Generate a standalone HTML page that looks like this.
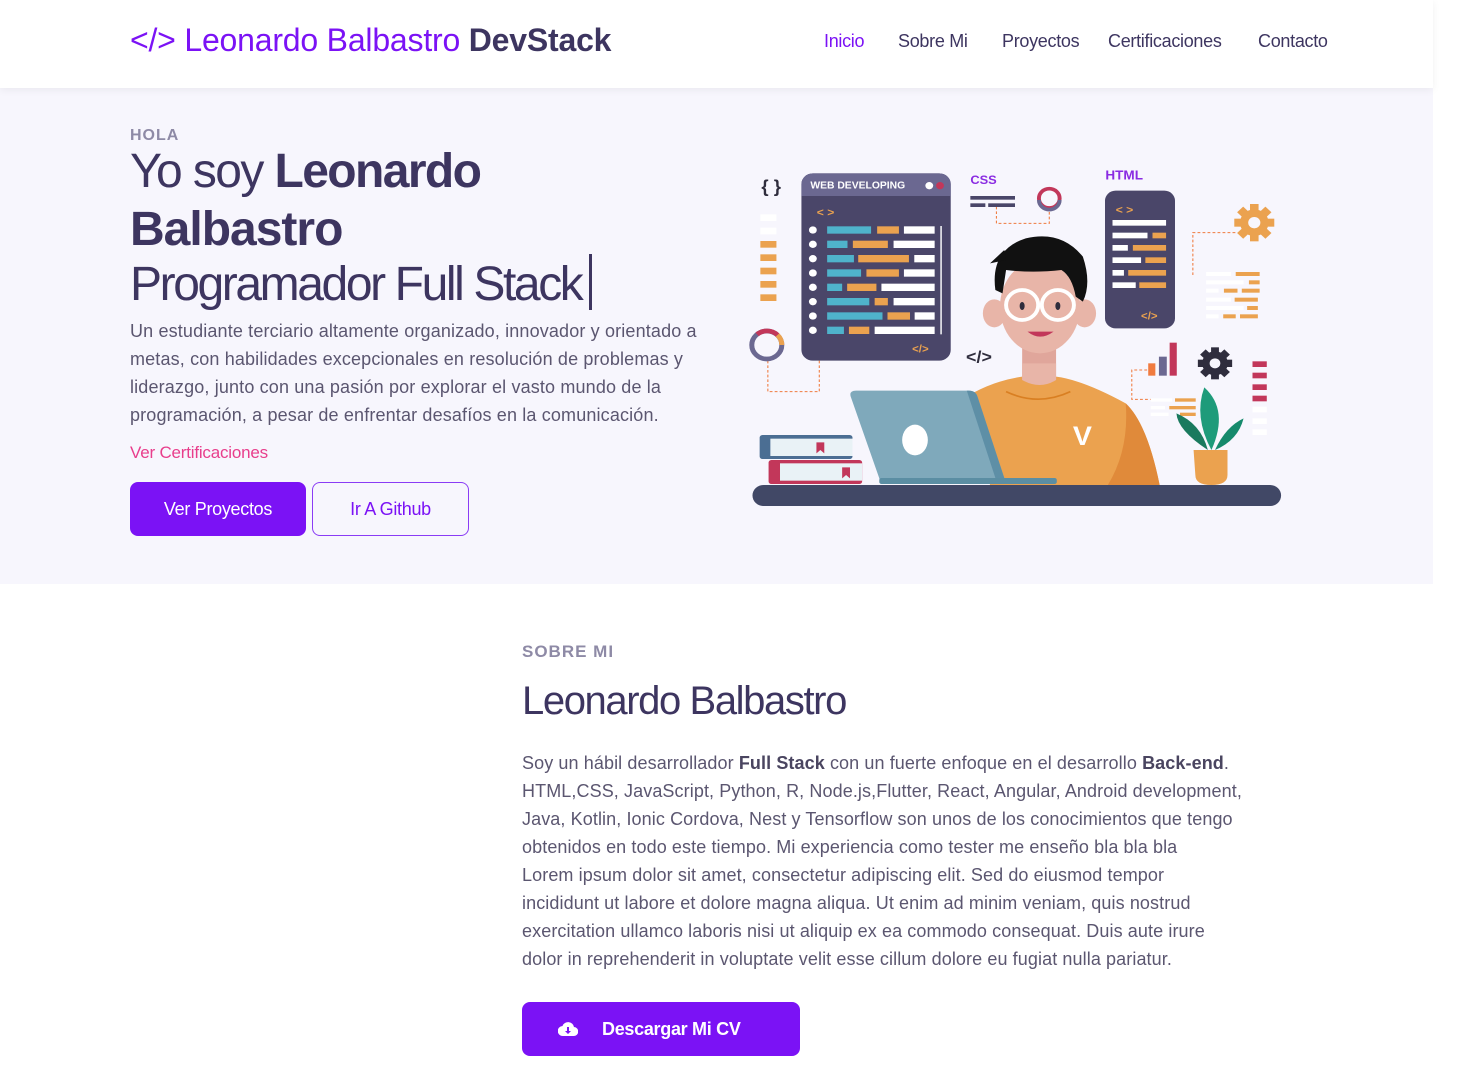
<!DOCTYPE html>
<html><head><meta charset="utf-8">
<style>
*{margin:0;padding:0;box-sizing:border-box}
body{width:1474px;height:1065px;overflow:hidden;background:#fff;font-family:"Liberation Sans",sans-serif;color:#3d3560;position:relative}
.abs{position:absolute;white-space:nowrap}
nav{position:absolute;left:0;top:0;width:1433px;height:88px;background:#fff;box-shadow:0 2px 8px rgba(0,0,0,.06);z-index:2}
.logo{left:130px;top:22px;font-size:32px;color:#7b12f5;letter-spacing:-0.2px}
.logo b{color:#3d3560}
.nl{top:31px;font-size:18px;color:#3d3560;letter-spacing:-0.3px}
.hero{position:absolute;left:0;top:88px;width:1433px;height:496px;background:#f7f6fd}
.hola{left:130px;top:127px;font-size:16px;font-weight:bold;color:#8e8aa6;letter-spacing:1px}
.h1{left:130px;font-size:48px;color:#3d3560;letter-spacing:-1px}
.p{font-size:18px;color:#5b5670;line-height:28px}
.btn{position:absolute;border-radius:8px;font-size:18px;display:flex;align-items:center;justify-content:center;letter-spacing:-0.3px}
</style></head><body>
<nav>
<div class="abs logo">&lt;/&gt; Leonardo Balbastro <b>DevStack</b></div>
<div class="abs nl" style="left:824px;color:#7b12f5">Inicio</div>
<div class="abs nl" style="left:898px">Sobre Mi</div>
<div class="abs nl" style="left:1002px">Proyectos</div>
<div class="abs nl" style="left:1108px">Certificaciones</div>
<div class="abs nl" style="left:1258px">Contacto</div>
</nav>
<div class="hero"></div>
<div class="abs hola">HOLA</div>
<div class="abs h1" style="top:144px;font-weight:normal;letter-spacing:-1.6px">Yo soy <span style="font-weight:bold">Leonardo</span></div>
<div class="abs h1" style="top:202px;font-weight:bold">Balbastro</div>
<div class="abs h1" style="top:254px;font-weight:normal;letter-spacing:-2.4px">Programador Full Stack<span style="display:inline-block;width:3px;height:56px;background:#3d3560;vertical-align:-10px;margin-left:8px"></span></div>
<div class="abs p" style="left:130px;top:317px;letter-spacing:0.15px">Un estudiante terciario altamente organizado, innovador y orientado a<br>metas, con habilidades excepcionales en resolución de problemas y<br>liderazgo, junto con una pasión por explorar el vasto mundo de la<br>programación, a pesar de enfrentar desafíos en la comunicación.</div>
<div class="abs" style="left:130px;top:443px;font-size:17px;color:#e83e8c;letter-spacing:-0.2px">Ver Certificaciones</div>
<div class="btn" style="left:130px;top:482px;width:176px;height:54px;background:#7b12f5;color:#fff">Ver Proyectos</div>
<div class="btn" style="left:312px;top:482px;width:157px;height:54px;border:1px solid #8a3cf5;color:#7b12f5;background:#f7f6fd">Ir A Github</div>

<svg class="abs" style="left:740px;top:150px" width="560" height="370" viewBox="0 0 1568 1110" preserveAspectRatio="none">
<g fill="none" stroke="#f07b3f" stroke-width="3" stroke-dasharray="8 6">
<path d="M78 632V725H222V632"/><path d="M718 170V220H866V180"/><path d="M1268 375V248H1390"/><path d="M1140 660H1097V748H1150"/>
</g>
<text x="60" y="128" font-size="52" font-weight="bold" fill="#2f2d3d" font-family="Liberation Sans">{ }</text>
<g fill="#fff"><rect x="57" y="193" width="45" height="20"/><rect x="57" y="233" width="45" height="20"/></g>
<g fill="#eba24f"><rect x="57" y="273" width="45" height="20"/><rect x="57" y="313" width="45" height="20"/><rect x="57" y="353" width="45" height="20"/><rect x="57" y="393" width="45" height="20"/><rect x="57" y="433" width="45" height="20"/></g>
<circle cx="75" cy="585" r="42" fill="none" stroke="#6b6891" stroke-width="14"/>
<path d="M48 553A42 42 0 0 1 105 555" fill="none" stroke="#c2375a" stroke-width="14"/>
<path d="M105 555A42 42 0 0 1 117 585" fill="none" stroke="#eba24f" stroke-width="14"/>
<rect x="172" y="70" width="418" height="562" rx="32" fill="#4a4669"/>
<path d="M204 70H558A32 32 0 0 1 590 102V138H172V102A32 32 0 0 1 204 70Z" fill="#6b6891"/>
<text x="197" y="116" font-size="29" font-weight="bold" fill="#fff" font-family="Liberation Sans">WEB DEVELOPING</text>
<circle cx="530" cy="107" r="11" fill="#fff"/><circle cx="560" cy="107" r="11" fill="#c2375a"/>
<text x="215" y="198" font-size="34" font-weight="bold" fill="#eba24f" font-family="Liberation Sans">&lt; &gt;</text>
<g fill="#fff"><circle cx="204" cy="240" r="11"/><circle cx="204" cy="283" r="11"/><circle cx="204" cy="326" r="11"/><circle cx="204" cy="369" r="11"/><circle cx="204" cy="412" r="11"/><circle cx="204" cy="455" r="11"/><circle cx="204" cy="498" r="11"/><circle cx="204" cy="541" r="11"/><rect x="561" y="228" width="4" height="325"/></g>
<g fill="#4fb3cb"><rect x="244" y="229" width="123" height="22"/><rect x="244" y="272" width="57" height="22"/><rect x="244" y="315" width="75" height="22"/><rect x="244" y="358" width="95" height="22"/><rect x="244" y="401" width="42" height="22"/><rect x="244" y="444" width="118" height="22"/><rect x="244" y="487" width="155" height="22"/><rect x="244" y="530" width="47" height="22"/></g>
<g fill="#eba24f"><rect x="384" y="229" width="61" height="22"/><rect x="316" y="272" width="98" height="22"/><rect x="331" y="315" width="142" height="22"/><rect x="354" y="358" width="91" height="22"/><rect x="300" y="401" width="82" height="22"/><rect x="377" y="444" width="37" height="22"/><rect x="413" y="487" width="63" height="22"/><rect x="305" y="530" width="57" height="22"/></g>
<g fill="#fff"><rect x="459" y="229" width="86" height="22"/><rect x="430" y="272" width="115" height="22"/><rect x="488" y="315" width="57" height="22"/><rect x="459" y="358" width="86" height="22"/><rect x="396" y="401" width="149" height="22"/><rect x="430" y="444" width="115" height="22"/><rect x="489" y="487" width="56" height="22"/><rect x="377" y="530" width="168" height="22"/></g>
<text x="482" y="607" font-size="32" font-weight="bold" fill="#eba24f" font-family="Liberation Sans">&lt;/&gt;</text>
<text x="645" y="102" font-size="36" font-weight="bold" fill="#8a2be2" font-family="Liberation Sans">CSS</text>
<g fill="#4a4669"><rect x="645" y="138" width="125" height="11"/><rect x="645" y="160" width="42" height="11"/><rect x="695" y="160" width="75" height="11"/></g>
<circle cx="866" cy="145" r="29" fill="none" stroke="#c2375a" stroke-width="11"/>
<path d="M837 150A29 29 0 0 0 895 150" fill="none" stroke="#6b6891" stroke-width="11"/>
<text x="1023" y="88" font-size="38" font-weight="bold" fill="#8a2be2" font-family="Liberation Sans">HTML</text>
<rect x="1022" y="122" width="196" height="413" rx="30" fill="#4a4669"/>
<text x="1052" y="190" font-size="34" font-weight="bold" fill="#eba24f" font-family="Liberation Sans">&lt; &gt;</text>
<g fill="#fff"><rect x="1043" y="210" width="150" height="17"/><rect x="1043" y="248" width="98" height="17"/><rect x="1043" y="285" width="43" height="17"/><rect x="1043" y="322" width="80" height="17"/><rect x="1043" y="360" width="32" height="17"/><rect x="1043" y="397" width="65" height="17"/></g>
<g fill="#eba24f"><rect x="1155" y="248" width="38" height="17"/><rect x="1100" y="285" width="93" height="17"/><rect x="1135" y="322" width="58" height="17"/><rect x="1087" y="360" width="106" height="17"/><rect x="1118" y="397" width="75" height="17"/></g>
<text x="1123" y="508" font-size="32" font-weight="bold" fill="#eba24f" font-family="Liberation Sans">&lt;/&gt;</text>
<g transform="translate(1440 218)"><circle r="40" fill="#eba24f"/><g fill="#eba24f"><rect x="-12" y="-56" width="24" height="112"/><rect x="-56" y="-12" width="112" height="24"/><rect x="-12" y="-56" width="24" height="112" transform="rotate(45)"/><rect x="-12" y="-56" width="24" height="112" transform="rotate(-45)"/></g><circle r="17" fill="#f7f6fd"/></g>
<g fill="#fff"><rect x="1305" y="366" width="70" height="12"/><rect x="1305" y="391" width="105" height="12"/><rect x="1305" y="416" width="35" height="12"/><rect x="1305" y="443" width="70" height="12"/><rect x="1305" y="468" width="105" height="12"/><rect x="1305" y="493" width="35" height="12"/></g>
<g fill="#eba24f"><rect x="1388" y="366" width="67" height="12"/><rect x="1425" y="391" width="30" height="12"/><rect x="1355" y="416" width="38" height="12"/><rect x="1405" y="416" width="50" height="12"/><rect x="1385" y="443" width="65" height="12"/><rect x="1420" y="468" width="30" height="12"/><rect x="1353" y="493" width="35" height="12"/><rect x="1400" y="493" width="50" height="12"/></g>
<text x="633" y="638" font-size="50" font-weight="bold" fill="#2f2d3d" font-family="Liberation Sans">&lt;/&gt;</text>
<rect x="1143" y="640" width="20" height="37" fill="#f07b3f"/><rect x="1173" y="620" width="22" height="57" fill="#6b6891"/><rect x="1203" y="578" width="20" height="99" fill="#c2375a"/>
<g transform="translate(1330 640)"><circle r="36" fill="#2f2d3d"/><g fill="#2f2d3d"><rect x="-11" y="-48" width="22" height="96"/><rect x="-48" y="-11" width="96" height="22"/><rect x="-11" y="-48" width="22" height="96" transform="rotate(45)"/><rect x="-11" y="-48" width="22" height="96" transform="rotate(-45)"/></g><circle r="15" fill="#f7f6fd"/></g>
<g fill="#c2375a"><rect x="1435" y="634" width="40" height="17"/><rect x="1435" y="668" width="40" height="17"/><rect x="1435" y="703" width="40" height="17"/><rect x="1435" y="737" width="40" height="17"/></g>
<g fill="#fff"><rect x="1435" y="770" width="40" height="17"/><rect x="1435" y="805" width="40" height="17"/><rect x="1435" y="838" width="40" height="17"/></g>
<g fill="#fff"><rect x="1150" y="745" width="60" height="10"/><rect x="1150" y="768" width="40" height="10"/><rect x="1150" y="788" width="50" height="10"/></g>
<g fill="#eba24f"><rect x="1218" y="745" width="58" height="10"/><rect x="1202" y="768" width="74" height="10"/><rect x="1232" y="788" width="44" height="10"/></g>
<path d="M650 730Q720 690 790 680H885Q960 690 1080 760Q1140 820 1175 1005H700Z" fill="#eba24f"/>
<path d="M1080 760Q1140 820 1175 1005H1030Q1090 900 1080 760Z" fill="#e08a3a"/>
<path d="M745 725Q835 770 925 725" fill="none" stroke="#d97f22" stroke-width="5"/>
<text x="932" y="885" font-size="80" font-weight="bold" fill="#fff" font-family="Liberation Sans">V</text>
<rect x="790" y="580" width="95" height="110" fill="#e0a69b"/>
<path d="M790 690Q840 720 885 690V640H790Z" fill="#e8b5a8"/>
<ellipse cx="712" cy="490" rx="32" ry="42" fill="#e8b5a8"/><ellipse cx="965" cy="490" rx="32" ry="42" fill="#e8b5a8"/>
<ellipse cx="840" cy="470" rx="112" ry="140" fill="#e8b5a8"/>
<path d="M715 420Q700 300 800 265Q900 240 960 320Q985 400 960 455L940 440Q930 380 900 360Q820 370 745 360L735 430Z" fill="#111"/>
<path d="M700 340L745 330L740 300Z" fill="#111"/>
<circle cx="790" cy="465" r="45" fill="none" stroke="#fff" stroke-width="11"/><circle cx="890" cy="465" r="45" fill="none" stroke="#fff" stroke-width="11"/>
<ellipse cx="790" cy="468" rx="7" ry="12" fill="#2f2d3d"/><ellipse cx="890" cy="468" rx="7" ry="12" fill="#2f2d3d"/>
<path d="M805 545Q840 575 878 545Z" fill="#c2375a"/>
<path d="M310 740Q305 722 325 722H640Q660 722 665 740L745 1000H395Z" fill="#7fa9bb"/>
<path d="M640 722Q660 722 665 740L745 1000H720L635 722Z" fill="#5e8fa6"/>
<ellipse cx="490" cy="870" rx="36" ry="46" fill="#fff"/>
<rect x="390" y="984" width="497" height="18" rx="6" fill="#5b8ea3"/>
<rect x="55" y="855" width="260" height="72" rx="8" fill="#4b6e93"/><rect x="85" y="866" width="230" height="52" fill="#e9f2f6"/>
<rect x="80" y="930" width="262" height="72" rx="8" fill="#c2375a"/><rect x="112" y="940" width="230" height="52" fill="#e9f2f6"/>
<path d="M214 877H236V910L225 900L214 910Z" fill="#c2375a"/><path d="M286 952H308V985L297 975L286 985Z" fill="#c2375a"/>
<path d="M1310 900Q1225 840 1222 790Q1290 820 1310 900Z" fill="#1a7a5e"/>
<path d="M1320 900Q1270 800 1300 712Q1370 780 1320 900Z" fill="#1e9b7a"/>
<path d="M1330 900Q1360 830 1410 805Q1395 870 1330 900Z" fill="#168a6c"/>
<path d="M1270 900H1365V975Q1365 1005 1320 1005Q1275 1005 1275 975Z" fill="#eba24f"/>
<rect x="35" y="1005" width="1480" height="63" rx="31" fill="#414866"/>
</svg>

<div class="abs" style="left:522px;top:642px;font-size:17px;font-weight:bold;color:#8e8aa6;letter-spacing:1px">SOBRE MI</div>
<div class="abs" style="left:522px;top:679px;font-size:40px;color:#3d3560;letter-spacing:-1.4px">Leonardo Balbastro</div>
<div class="abs p" style="left:522px;top:749px;letter-spacing:0.1px">Soy un hábil desarrollador <b style="color:#4a4560">Full Stack</b> con un fuerte enfoque en el desarrollo <b style="color:#4a4560">Back-end</b>.<br>HTML,CSS, JavaScript, Python, R, Node.js,Flutter, React, Angular, Android development,<br>Java, Kotlin, Ionic Cordova, Nest y Tensorflow son unos de los conocimientos que tengo<br>obtenidos en todo este tiempo. Mi experiencia como tester me enseño bla bla bla<br>Lorem ipsum dolor sit amet, consectetur adipiscing elit. Sed do eiusmod tempor<br>incididunt ut labore et dolore magna aliqua. Ut enim ad minim veniam, quis nostrud<br>exercitation ullamco laboris nisi ut aliquip ex ea commodo consequat. Duis aute irure<br>dolor in reprehenderit in voluptate velit esse cillum dolore eu fugiat nulla pariatur.</div>
<div class="btn" style="left:522px;top:1002px;width:278px;height:54px;background:#7b12f5;color:#fff;font-weight:bold;justify-content:flex-start;padding-left:36px">
<svg width="20" height="16" viewBox="0 0 20 16" style="margin-right:24px"><path d="M5 15H15.5A4.5 4.5 0 0 0 16 6A6 6 0 0 0 4.5 5A5 5 0 0 0 5 15Z" fill="#fff"/><path d="M9 6H11V10H13L10 13L7 10H9Z" fill="#7b12f5"/></svg>Descargar Mi CV</div>
</body></html>
